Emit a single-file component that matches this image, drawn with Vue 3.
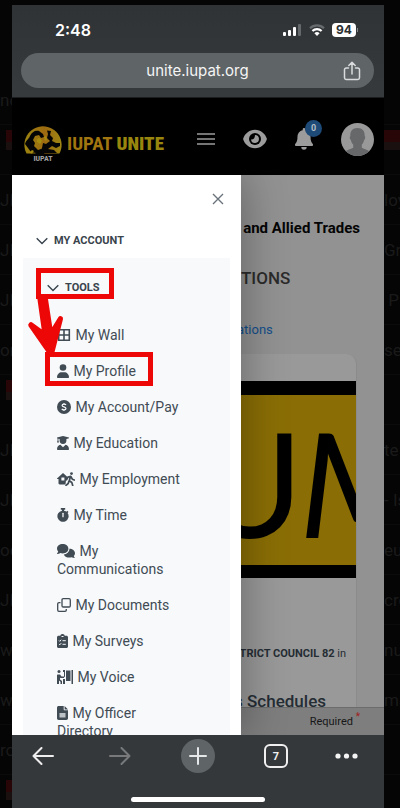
<script setup>
const leftRows = ['nc', '', 'JIF', 'JIF', 'JIF', 'or', '', 'JIF', 'JIF', 'oc', 'JIF', 'we', 'we', 'ro', '']
const rightRows = ['', '', 'loy', 'Gri', '\u00a0P', 'se', '', 'te', '- Is', 'eu', 'cre', 'nue', 'ma', '', '']

const links = [
  { icon: 'wall', width: 14, label: 'My Wall' },
  { icon: 'profile', width: 12, label: 'My Profile' },
  { icon: 'account', width: 14, label: 'My Account/Pay' },
  { icon: 'education', width: 12, label: 'My Education' },
  { icon: 'employment', width: 18, label: 'My Employment' },
  { icon: 'time', width: 12, label: 'My Time' },
  { icon: 'communications', width: 18, label: 'My Communications' },
  { icon: 'documents', width: 14, label: 'My Documents' },
  { icon: 'surveys', width: 11, label: 'My Surveys' },
  { icon: 'voice', width: 16, label: 'My Voice' },
  { icon: 'officer', width: 11, label: 'My Officer Directory' }
]
</script>

<template>
  <div class="stage">
    <div class="strip strip-left" aria-hidden="true">
      <div v-for="(row, i) in leftRows" :key="i" class="strip-row">
        <span v-if="row">{{ row }}</span>
        <i v-else class="thumb"></i>
      </div>
    </div>

    <div class="phone">
      <header class="chrome">
        <div class="status">
          <span class="clock">2:48</span>
          <span class="signals">
            <svg width="20" height="14" viewBox="0 0 20 14">
              <g fill="#fff">
                <rect x="1" y="9" width="3" height="4" rx="1" />
                <rect x="6" y="7" width="3" height="6" rx="1" />
                <rect x="11" y="4" width="3" height="9" rx="1" />
              </g>
              <rect x="16" y="1" width="3" height="12" rx="1" fill="#66696b" />
            </svg>
            <svg width="16" height="14" viewBox="0 0 16 14" fill="none">
              <path d="M1 5.2a10 10 0 0 1 14 0" stroke="#686b6d" stroke-width="2.2" />
              <path d="M3.4 8a6.6 6.6 0 0 1 9.2 0" stroke="#fff" stroke-width="2.2" />
              <path d="M8 13l-2.6-2.8a3.8 3.8 0 0 1 5.2 0z" fill="#fff" />
            </svg>
            <span class="battery">94</span>
          </span>
        </div>
        <div class="address">
          <input type="text" value="unite.iupat.org" aria-label="Address" />
          <button type="button" class="share" aria-label="Share">
            <svg width="18" height="20" viewBox="0 0 18 20" fill="none" stroke="#d9dbdc" stroke-width="1.5" stroke-linecap="round" stroke-linejoin="round">
              <path d="M5.500 7H3.200A1.700 1.700 0 0 0 1.500 8.700v8.100a1.700 1.700 0 0 0 1.700 1.700h11.600a1.700 1.700 0 0 0 1.700-1.700V8.700A1.700 1.700 0 0 0 14.800 7h-2.300M9 13V1.500M5.800 4.500L9 1.300l3.200 3.200" />
            </svg>
          </button>
        </div>
      </header>

      <div class="site-head">
        <a href="#" class="brand" aria-label="IUPAT Unite home">
          <svg width="38" height="38" viewBox="0 0 38 38">
            <defs>
              <linearGradient id="gold" x1="0" x2="1">
                <stop offset="0" stop-color="#9b8410" />
                <stop offset=".55" stop-color="#9d6a10" />
                <stop offset="1" stop-color="#9d8614" />
              </linearGradient>
            </defs>
            <path d="M2.500 28.500A18.600 18.600 0 1 1 35.500 28.500z" fill="url(#gold)" />
            <g fill="#050505">
              <path d="M1 19c1-4 4-5 5-8 2-4 5-6 9-5l4 3 1 3-3 1-2-3-4 1-2 4 2 3-1 3 4 4 3-1 4 3-2 4H9l3-3-5-1-3-4z" />
              <path d="M23 5.500l4 .5-1 4 3 3-1 3 4 2 4 0v3l-4 2-4-2-4 3 6 1 3 3H15l3-5 1-5 3 1 4-3-3-3 1-4z" />
            </g>
            <path d="M13 14l3-1 2 3-2 3-3-2zM20 12l2-1 1 4-2 1zM5 28l3-3 2 1-2 2.500z" fill="#a58b10" />
            <text x="19" y="36" text-anchor="middle" class="logo-label">IUPAT</text>
          </svg>
          <span class="wordmark">IUPAT <b>UNITE</b></span>
        </a>
        <div class="tools">
          <button type="button" aria-label="Menu">
            <svg width="18" height="14" viewBox="0 0 18 14" stroke="#9c9c9c" stroke-width="1.500">
              <path d="M0 2h18M0 7h18M0 12h18" />
            </svg>
          </button>
          <button type="button" aria-label="View">
            <svg width="24" height="20" viewBox="0 0 24 20">
              <path d="M12 .8C6 .8 1.800 5 .3 9.300a2 2 0 0 0 0 1.400C1.800 15 6 19.200 12 19.200S22.200 15 23.700 10.700a2 2 0 0 0 0-1.400C22.200 5 18 .8 12 .8z" fill="#9c9c9c" />
              <circle cx="12" cy="10" r="6" fill="#000" />
              <path d="M12 6a4 4 0 1 1-4 4.500c2 .5 4-1.200 4-4.500z" fill="#9c9c9c" />
            </svg>
          </button>
          <button type="button" class="bell" aria-label="Notifications">
            <svg width="18" height="22" viewBox="0 0 18 22" fill="#9c9c9c">
              <path d="M9 0a1.300 1.300 0 0 0-1.300 1.300v.9C4.600 2.800 2.500 5.400 2.500 8.600c0 4-.9 6-2.300 7.500-.5.700-.1 1.900.9 1.900h15.800c1 0 1.400-1.200.9-1.900-1.400-1.500-2.300-3.500-2.300-7.500 0-3.200-2.100-5.800-5.200-6.400v-.9A1.300 1.300 0 0 0 9 0zM6.300 19a2.700 2.700 0 0 0 5.400 0z" />
            </svg>
            <span class="badge">0</span>
          </button>
          <button type="button" aria-label="Account">
            <svg width="33" height="33" viewBox="0 0 33 33">
              <defs><clipPath id="round"><circle cx="16.500" cy="16.500" r="16.500" /></clipPath></defs>
              <g clip-path="url(#round)">
                <rect width="33" height="33" fill="#999" />
                <path d="M16.500 5c5 0 7.400 3 7.200 8 .9.600.6 3.500-.6 4-.4 2-1.200 3.500-2.300 4.600v3.200c2.500 1.700 7 2 9.200 5V33H3v-3.200c2.200-3 6.700-3.300 9.200-5v-3.200c-1.100-1.100-1.900-2.600-2.300-4.600-1.200-.5-1.500-3.400-.6-4-.2-5 2.200-8 7.200-8z" fill="#66686a" />
              </g>
            </svg>
          </button>
        </div>
      </div>

      <div class="body">
        <aside class="drawer">
          <div class="close-row">
            <button type="button" aria-label="Close menu">
              <svg width="12" height="12" viewBox="0 0 12 12" stroke="#6a737b" stroke-width="1.400"><path d="M1 1l10 10M11 1L1 11" /></svg>
            </button>
          </div>
          <button type="button" class="group">
            <svg width="12" height="8" viewBox="0 0 12 8" fill="none" stroke="#39444d" stroke-width="1.400"><path d="M.700 1.200L6 6.500l5.300-5.300" /></svg>
            MY ACCOUNT
          </button>
          <nav class="panel">
            <button type="button" class="group sub">
              <svg width="12" height="8" viewBox="0 0 12 8" fill="none" stroke="#39444d" stroke-width="1.400"><path d="M.700 1.200L6 6.500l5.300-5.300" /></svg>
              TOOLS
            </button>
            <a v-for="link in links" :key="link.icon" href="#" class="item">
              <svg class="icon" :width="link.width" height="14" :viewBox="`0 0 ${link.width} 14`" fill="#414b54">
                <path v-if="link.icon === 'wall'" d="M1.700 1.700h10.600v10.600H1.700zM7 1.700v10.600M1.700 7h10.600" fill="none" stroke="#414b54" stroke-width="1.600" />
                <template v-else-if="link.icon === 'profile'">
                  <circle cx="6" cy="3.500" r="3.300" />
                  <path d="M0 13.200C0 10.300 2.200 8.200 4.800 8.200h2.400c2.600 0 4.800 2.100 4.800 5 0 .4-.3.700-.7.700H.700c-.4 0-.7-.3-.7-.7z" />
                </template>
                <template v-else-if="link.icon === 'account'">
                  <circle cx="7" cy="7" r="7" />
                  <path d="M9 5C8.600 4.300 7.800 4.100 7 4.100c-1.100 0-1.900.5-1.900 1.300C5.100 7.300 9 6.500 9 8.500c0 .9-.9 1.400-2 1.400-.9 0-1.800-.3-2.200-1M7 2.900v1.200M7 9.900v1.200" fill="none" stroke="#f7f9fb" stroke-width="1.200" />
                </template>
                <template v-else-if="link.icon === 'education'">
                  <path d="M0 1.500L6 0l6 1.500v.8l-2.600.7v1.500a3.400 3.400 0 0 1-6.800 0V3l-1.200-.3v1.600L2 6.500H0l.6-2.200V2.500L0 2.300z" />
                  <path d="M3.400 8.800L6 11.300l2.600-2.500C10.600 9.300 12 11 12 13.200c0 .5-.3.800-.8.800H.800c-.5 0-.8-.3-.8-.8C0 11 1.400 9.300 3.400 8.800z" />
                </template>
                <template v-else-if="link.icon === 'employment'">
                  <path d="M0 6.500L6 1l5 4.500-2 2.500-.5 4.500H2.700c-.7 0-1.200-.5-1.200-1.200V7H0zM4.400 5.500v3h3v-3z" fill-rule="evenodd" />
                  <circle cx="14.500" cy="1.600" r="1.400" />
                  <path d="M9.500 7.800L11 5l2.800-.6 1.500 2.800 2 .8M13.300 4.800l-1 4 2.500 1.700.9 3M12 9l-.8 2.500L9 13.300" fill="none" stroke="#414b54" stroke-width="1.700" stroke-linecap="round" stroke-linejoin="round" />
                </template>
                <template v-else-if="link.icon === 'time'">
                  <path d="M3.800 0h4.400v1.700H7v1c.9.100 1.700.5 2.400 1l.9-.9 1.200 1.200-.9 1A5.600 5.600 0 1 1 5 2.700v-1H3.800z" />
                  <path d="M6 5.300v3.400" stroke="#f7f9fb" stroke-width="1.300" stroke-linecap="round" />
                </template>
                <template v-else-if="link.icon === 'communications'">
                  <path d="M5.700 0c3.200 0 5.700 2.100 5.700 4.700S8.900 9.400 5.700 9.400c-.8 0-1.600-.1-2.300-.4-.9.600-2 .9-3.100.9-.3 0-.4-.3-.2-.5.5-.5.900-1.200 1.100-1.900C.500 6.700 0 5.800 0 4.700 0 2.100 2.500 0 5.700 0z" />
                  <path d="M12.400 4.500c3.100.1 5.600 2.200 5.600 4.800 0 1-.4 2-1.200 2.800.2.700.6 1.300 1.100 1.800.2.100.1.100-.2.100-1.100 0-2.200-.1-3.100-.7-3 .9-6.600-.1-7.800-2.900 3.200-.3 5.700-2.700 5.600-5.900z" />
                </template>
                <g v-else-if="link.icon === 'documents'" fill="none" stroke="#414b54" stroke-width="1.300">
                  <rect x="5" y=".7" width="8.300" height="8.300" rx="1.200" />
                  <path d="M3.500 4.700H2A1.300 1.300 0 0 0 .700 6v6A1.300 1.300 0 0 0 2 13.300h6A1.300 1.300 0 0 0 9.300 12v-1" />
                </g>
                <template v-else-if="link.icon === 'surveys'">
                  <path d="M1.500 1.700h1.700a2.400 2.400 0 0 1 4.600 0h1.700c.8 0 1.500.7 1.500 1.500v9.300c0 .8-.7 1.500-1.500 1.500h-8C.700 14 0 13.300 0 12.500V3.200c0-.8.700-1.500 1.500-1.500z" />
                  <path d="M2 6.500l.8.800 1.400-1.600M2 10l.8.800L4.200 9.200M5.500 6.700h3.300M5.500 10.300h3.300M4.500 2.500h2" fill="none" stroke="#f7f9fb" />
                </template>
                <template v-else-if="link.icon === 'voice'">
                  <circle cx="2" cy="1.600" r="1.500" />
                  <path d="M.5 4.500h2.500l1.500 2H7V8H3.500L3 7.500v2L5 11v3H3.500v-2.200L2 10.500V14H0V5zM6 0h2v7.500l-1-1V2H6zM9 .5h4.500V11H9zM14.500 0H16v14h-1.500zM6 9h2v5H6z" />
                </template>
                <template v-else>
                  <path d="M1.700 0h5v3.300c0 .6.400 1 1 1H11v8c0 1-.7 1.700-1.700 1.700H1.700C.700 14 0 13.300 0 12.300V1.700C0 .700.700 0 1.700 0zM7.600 0L11 3.400H7.600z" />
                  <path d="M2.500 7h6v4.500h-6z" fill="#bcc1c5" />
                </template>
              </svg>
              {{ link.label }}
            </a>
          </nav>

          <svg class="marks" width="160" height="216" viewBox="0 0 160 216" fill="none" stroke="#ed0707" aria-hidden="true">
            <rect x="26.500" y="95.500" width="73" height="26" stroke-width="5" />
            <rect x="35.500" y="179.500" width="103" height="29" stroke-width="5" />
            <path d="M26 121h8.500l5.200 34 7.300-12c1-1.600 3.400-1 3 1L41 179h-4L17.500 151c-1-1.600 1-3.600 2.500-2.500l11 8z" fill="#ed0707" stroke-width="2" stroke-linejoin="round" />
          </svg>
        </aside>

        <main class="page">
          <h1>and Allied Trades</h1>
          <h2>TIONS</h2>
          <a href="#" class="crumb">ations</a>
          <section class="card">
            <svg class="banner" viewBox="0 0 115 197" role="img" aria-label="UM">
              <rect width="115" height="197" fill="#000" />
              <rect y="14" width="115" height="170" fill="#8a6e05" />
              <text x="-45" y="157" class="banner-text">U</text>
              <text x="58" y="157" class="banner-text slanted">M</text>
            </svg>
            <p class="council"><b>TRICT COUNCIL 82</b>&nbsp;in</p>
            <h3>s Schedules</h3>
          </section>
          <div class="required">Required <sup>*</sup></div>
        </main>
      </div>

      <footer class="toolbar">
        <div class="buttons">
          <button type="button" aria-label="Back">
            <svg width="22" height="18" viewBox="0 0 22 18" fill="none" stroke="#eee" stroke-width="2" stroke-linecap="round" stroke-linejoin="round"><path d="M21 9H1.500M9.500 1l-8 8 8 8" /></svg>
          </button>
          <button type="button" aria-label="Forward">
            <svg width="22" height="18" viewBox="0 0 22 18" fill="none" stroke="#77797b" stroke-width="2" stroke-linecap="round" stroke-linejoin="round"><path d="M1 9h19.500M12.500 1l8 8-8 8" /></svg>
          </button>
          <button type="button" class="plus" aria-label="New tab">
            <svg width="18" height="18" viewBox="0 0 18 18" stroke="#e6e7e8" stroke-width="2" stroke-linecap="round"><path d="M9 1v16M1 9h16" /></svg>
          </button>
          <button type="button" class="tabs" aria-label="Tabs">7</button>
          <button type="button" aria-label="More">
            <svg width="24" height="6" viewBox="0 0 24 6" fill="#f4f4f4"><circle cx="3" cy="3" r="2.600" /><circle cx="11.500" cy="3" r="2.600" /><circle cx="20" cy="3" r="2.600" /></svg>
          </button>
        </div>
        <div class="home"></div>
      </footer>
    </div>

    <div class="strip strip-right" aria-hidden="true">
      <div v-for="(row, i) in rightRows" :key="i" class="strip-row">
        <span v-if="row">{{ row }}</span>
        <i v-else-if="i === 1" class="thumb"></i>
      </div>
    </div>
  </div>
</template>

<style>
body {
  background: #050505;
}
</style>

<style scoped>
* {
  box-sizing: border-box;
}

button {
  display: flex;
  align-items: center;
  justify-content: center;
  padding: 0;
  border: 0;
  background: none;
  color: inherit;
  font: inherit;
}

svg {
  display: block;
}

.stage {
  display: grid;
  grid-template-columns: 12px minmax(0, 1fr) 16px;
  height: 100vh;
  padding-top: 5px;
  overflow: hidden;
  background: #050505;
  font-family: Roboto, "Liberation Sans", sans-serif;
}

.strip {
  padding-top: 70px;
  overflow: hidden;
  color: #1a1a1a;
  font-size: 17px;
  white-space: nowrap;
}

.strip-row {
  display: flex;
  align-items: center;
  height: 50px;
  overflow: hidden;
  border-bottom: 1px solid #0b0b0b;
}

.thumb {
  flex: none;
  align-self: flex-start;
  width: 20px;
  height: 20px;
  margin-top: 5px;
  background: linear-gradient(#280506 60%, #1a1010 60%);
}

.strip-left .thumb {
  margin-left: 6px;
}

.phone {
  display: flex;
  flex-direction: column;
  min-height: 0;
  background: #34383b;
}

.chrome {
  flex: none;
  padding-bottom: 9px;
  background: linear-gradient(#2f3335, #363a3d);
  border-bottom: 1px solid #1b1d1f;
}

.status {
  display: flex;
  align-items: center;
  justify-content: space-between;
  height: 48px;
  padding: 2px 26px 0 43px;
  color: #fff;
}

.clock {
  font: 600 16px/20px Inter, sans-serif;
}

.signals {
  display: flex;
  align-items: center;
  gap: 7px;
}

.battery {
  position: relative;
  width: 24px;
  margin-right: 2px;
  border-radius: 4px;
  background: #fff;
  color: #2c3032;
  font: 700 12px/14px Inter, sans-serif;
  text-align: center;
}

.battery::after {
  content: "";
  position: absolute;
  top: 5px;
  right: -2px;
  width: 1px;
  height: 4px;
  background: #85888a;
}

.address {
  display: flex;
  align-items: center;
  height: 35px;
  margin: 0 10px 0 9px;
  padding: 0 13px 0 31px;
  border-radius: 18px;
  background: #5f6467;
}

.address input {
  flex: 1;
  min-width: 0;
  padding: 0;
  border: 0;
  background: none;
  color: #f5f5f5;
  font: 400 15px/20px Inter, sans-serif;
  text-align: center;
}

.site-head {
  display: flex;
  flex: none;
  align-items: center;
  justify-content: space-between;
  height: 77px;
  padding: 5px 10px 0 12px;
  background: #000;
}

.brand {
  display: flex;
  align-items: center;
  gap: 5px;
  padding-top: 10px;
  text-decoration: none;
}

.logo-label {
  fill: #a0a0a0;
  font: 700 8px "Roboto Condensed", "Liberation Sans Narrow", Roboto, sans-serif;
}

.wordmark {
  color: #a1750f;
  font: 700 19px/24px "Roboto Condensed", "Liberation Sans Narrow", Roboto, sans-serif;
  white-space: nowrap;
}

.wordmark b {
  color: #98860f;
}

.tools {
  display: flex;
  align-items: center;
  gap: 28px;
}

.bell {
  position: relative;
}

.badge {
  position: absolute;
  top: -8px;
  left: 10px;
  width: 17px;
  height: 17px;
  border-radius: 50%;
  background: #1d4a77;
  color: #b4bcc4;
  font-size: 9px;
  font-weight: 700;
  line-height: 17px;
  text-align: center;
}

.body {
  display: flex;
  flex: 1;
  min-height: 0;
  overflow: hidden;
}

.drawer {
  position: relative;
  z-index: 1;
  display: flex;
  flex: none;
  flex-direction: column;
  width: 229px;
  padding: 0 11px;
  background: #fff;
  box-shadow: 4px 0 40px rgba(0, 0, 0, 0.3);
}

.close-row {
  display: flex;
  flex: none;
  justify-content: flex-end;
  height: 48px;
  padding: 0 6px;
}

.group {
  flex: none;
  justify-content: flex-start;
  gap: 6px;
  height: 35px;
  padding: 0 13px;
  color: #39444d;
  font-size: 11px;
  font-weight: 700;
}

.panel {
  flex: 1;
  min-height: 0;
  overflow: hidden;
  background: #f7f9fb;
}

.sub {
  height: 59px;
  padding: 0 24px;
}

.item {
  display: block;
  padding: 9px 56px 9px 34px;
  color: #414b54;
  font-size: 14px;
  line-height: 18px;
  text-decoration: none;
  white-space: nowrap;
}

.item:nth-child(8),
.item:last-child {
  white-space: normal;
}

.icon {
  display: inline-block;
  margin-right: 1px;
  vertical-align: -2px;
}

.marks {
  position: absolute;
  top: 0;
  left: 0;
  pointer-events: none;
}

.page {
  display: flex;
  flex: 1;
  flex-direction: column;
  min-width: 0;
  overflow: hidden;
  background: #929292;
  white-space: nowrap;
}

h1,
h2,
h3,
p {
  flex: none;
  margin: 0;
}

h1 {
  padding: 43px 24px 0 0;
  color: #050505;
  font-size: 15px;
  font-weight: 700;
  line-height: 20px;
  text-align: right;
}

h2 {
  padding-top: 28px;
  color: #2b2b2b;
  font-size: 17px;
  font-weight: 500;
  line-height: 24px;
}

.crumb {
  margin-left: -4px;
  padding-top: 30px;
  color: #144e8a;
  font-size: 13px;
  line-height: 20px;
  text-decoration: none;
}

.card {
  flex: 1;
  min-height: 0;
  margin: 14px 27px 0 0;
  padding-top: 27px;
  overflow: hidden;
  border-right: 1px solid #8b8b8b;
  border-radius: 0 10px 0 0;
  background: #999;
}

.banner {
  width: 100%;
}

.banner-text {
  fill: #000;
  font: 400 146px Lato, sans-serif;
}

.slanted {
  font-style: italic;
}

.council {
  display: flex;
  justify-content: flex-end;
  padding: 66px 10px 0 0;
  color: #252d34;
  font-size: 11px;
  line-height: 20px;
}

h3 {
  display: flex;
  justify-content: flex-end;
  padding: 25px 30px 0 0;
  color: #252d34;
  font-size: 17px;
  font-weight: 500;
  line-height: 24px;
}

.required {
  flex: none;
  height: 28px;
  padding-right: 24px;
  border-top: 1px solid #6c6c6c;
  background: #7e7e7e;
  color: #171717;
  font-size: 11px;
  line-height: 27px;
  text-align: right;
}

.required sup {
  color: #a02020;
  font-size: 10px;
  line-height: 0;
}

.toolbar {
  display: flex;
  flex: none;
  flex-direction: column;
  align-items: center;
  justify-content: space-between;
  height: 73px;
  padding: 4px 0 6px;
  background: #34383b;
}

.buttons {
  display: grid;
  grid-template-columns: 61fr 94fr 62fr 94fr 47fr;
  align-items: center;
  justify-items: center;
  width: 100%;
  padding-right: 14px;
}

.plus {
  width: 34px;
  height: 34px;
  border-radius: 50%;
  background: #5f6467;
}

.tabs {
  width: 24px;
  height: 24px;
  border: 2px solid #f0f0f0;
  border-radius: 6px;
  color: #f0f0f0;
  font-size: 11px;
  font-weight: 700;
}

.home {
  width: 134px;
  height: 5px;
  border-radius: 3px;
  background: #fff;
}
</style>
